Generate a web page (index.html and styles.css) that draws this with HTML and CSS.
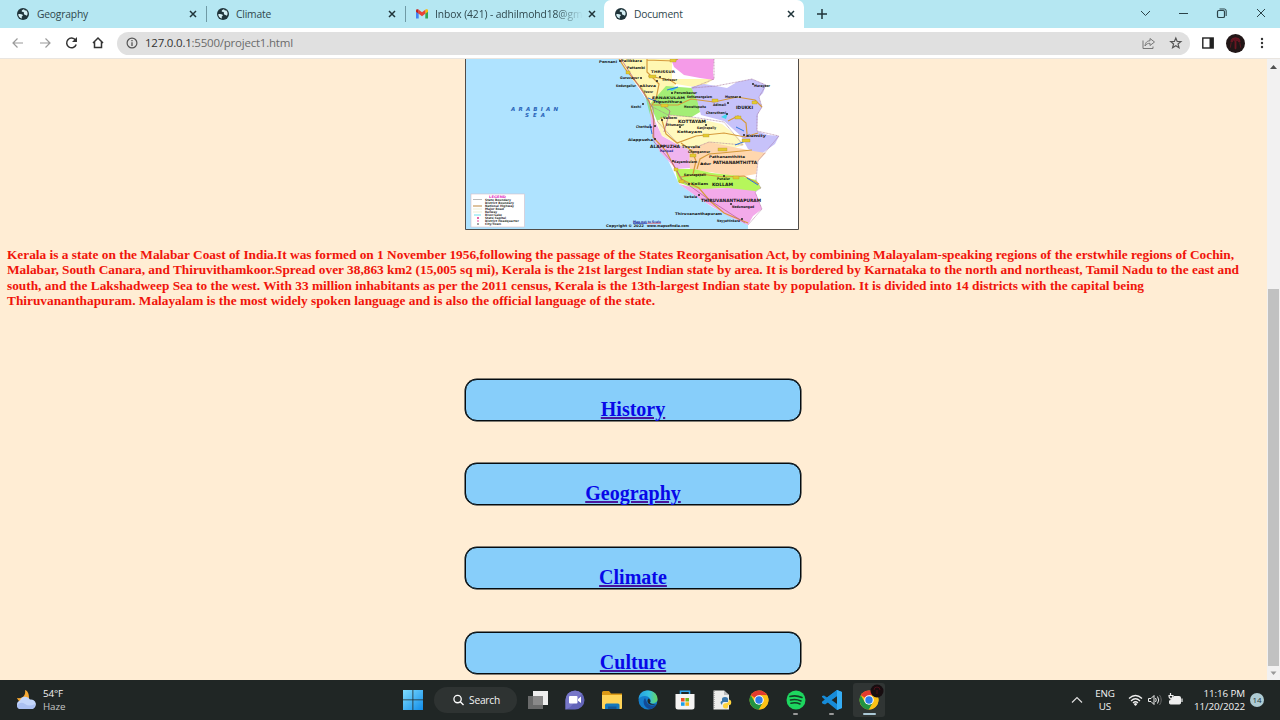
FILE: index.html
```html
<!DOCTYPE html>
<html lang="en">
<head>
<meta charset="utf-8">
<title>Document</title>
<link rel="stylesheet" href="styles.css">
</head>
<body>
<svg class="defs" width="0" height="0">
  <symbol id="globe" viewBox="0 0 12 12"><circle cx="6" cy="6" r="6" fill="#20343a"/><path d="M1.200 6.200C2.800 6 4.600 6 5.600 6.800 6.300 7.600 5.400 8.300 4.700 8.600L4.900 10.600C2.800 10 1.300 8.500 1.200 6.200ZM7 1.300C5.200 2 4.300 2.700 4.800 3.600 5.400 4.300 6.400 3.800 6.900 4.500 7.100 5.700 6.500 6.300 7.700 6.700 8.900 6.900 9.300 7.600 9.900 7.700 11.200 6 10.700 3.500 9 2.200 8.500 2.900 7.500 2.600 7 1.300Z" fill="#d5eff4"/></symbol>
  <symbol id="close" viewBox="0 0 8 8"><path d="M1 1 7 7M7 1 1 7" stroke="#20343a" stroke-width="1.500"/></symbol>
  <symbol id="chrome" viewBox="0 0 20 20"><circle cx="10" cy="10" r="9.500" fill="#fbc116"/><path d="M10 10 1.770 5.250A9.500 9.500 0 0 1 18.230 5.250L10 5.250Z" fill="#e33b2e"/><path d="M1.770 5.250A9.500 9.500 0 0 0 10 19.500L14.110 12.370 10 10 5.900 12.370Z" fill="#229342"/><path d="M10 5.250H18.230A9.500 9.500 0 0 1 10 19.500L14.110 12.370Z" fill="#fbc116"/><circle cx="10" cy="10" r="4.750" fill="#fff"/><circle cx="10" cy="10" r="3.700" fill="#2e7de9"/></symbol>
</svg>

<header class="tabs">
  <div class="tab t1"><svg class="fav"><use href="#globe"/></svg><span class="title">Geography</span><svg class="x"><use href="#close"/></svg></div>
  <div class="tab t2"><svg class="fav"><use href="#globe"/></svg><span class="title">Climate</span><svg class="x"><use href="#close"/></svg></div>
  <div class="tab t3"><svg class="fav" viewBox="0 0 12 12"><path d="M0 2.500V10.500H2.700V5Z" fill="#4285f4"/><path d="M12 2.500V10.500H9.300V5Z" fill="#34a853"/><path d="M0 2.600C0 1.300 1.500 1 2.700 1.800V5.800L0 3.800Z" fill="#c5221f"/><path d="M12 2.600C12 1.300 10.500 1 9.300 1.800V5.800L12 3.800Z" fill="#fbbc04"/><path d="M2.700 1.800 6 4.300 9.300 1.800V5.800L6 8.300 2.700 5.800Z" fill="#ea4335"/></svg><span class="title fade">Inbox (421) - adhilmohd18@gma</span><svg class="x"><use href="#close"/></svg></div>
  <div class="tab active"><svg class="fav"><use href="#globe"/></svg><span class="title">Document</span><svg class="x"><use href="#close"/></svg></div>
  <svg class="plus" viewBox="0 0 10 10"><path d="M5 0V10M0 5H10" stroke="#20343a" stroke-width="1.500"/></svg>
  <svg class="winctl" viewBox="0 0 126 12" fill="none" stroke="#2b4248" stroke-width="1"><path d="M1 4 5.500 8.500 10 4M39 6.500H48M117 2 125 10M125 2 117 10"/><rect x="77.500" y="3.500" width="7" height="7" rx="1.300" stroke-width="1.200"/><path d="M79.500 2H84.500Q86.200 2 86.200 4V9"/></svg>
</header>

<div class="toolbar">
  <svg class="nav" viewBox="0 0 95 16" fill="none" stroke-width="1.200"><path d="M11 8H1M5.500 3.500 1 8 5.500 12.500M28 8H38M33.500 3.500 38 8 33.500 12.500" stroke="#9a9a9a"/><path d="M63.500 5A4.900 4.900 0 1 0 64.200 9.500" stroke="#333" stroke-width="1.500"/><path d="M65 2V7H60Z" fill="#333"/><path d="M81 8 86 3 91 8M82.500 7V12.500H89.500V7" stroke="#333" stroke-width="1.500"/></svg>
  <div class="url">
    <svg class="info" viewBox="0 0 12 12"><circle cx="6" cy="6" r="4.900" fill="none" stroke="#555" stroke-width="1.200"/><path d="M6 5.300V9M6 3V4.200" stroke="#555" stroke-width="1.300"/></svg>
    <span class="addr"><b>127.0.0.1</b>:5500/project1.html</span>
    <svg class="urlicons" viewBox="0 0 42 14" fill="none" stroke="#777"><path d="M2 4.500V12.500H12V10.500"/><path d="M4 10C4.500 6 6.500 4.800 9 4.800V2.500L13.500 6 9 9.500V7.300C7 7.300 5.500 7.700 4 10Z"/><path d="M34.800 2 36.200 5.400 39.900 5.600 37 8 38 11.700 34.800 9.700 31.600 11.700 32.600 8 29.700 5.600 33.400 5.400Z" stroke="#555" stroke-width="1.200"/></svg>
  </div>
  <svg class="panel" viewBox="0 0 12 12"><rect x=".8" y="1" width="10.400" height="10" fill="#fff" stroke="#222" stroke-width="1.400"/><path d="M7.500 1H11V11H7.500Z" fill="#222"/></svg>
  <svg class="avatar" viewBox="0 0 18 18"><circle cx="9" cy="9" r="9" fill="#211617"/><path d="M4.500 7Q5 3.500 9 3.500T13.500 7L12 7.500 10.500 5.500 9.500 7V14H8.500V7L7 5.500 6 7.500ZM5 8 4 13M13 8 14 13" stroke="#7d1a26" stroke-width=".6" fill="#5c1421"/></svg>
  <svg class="dots" viewBox="0 0 4 14" fill="#333"><circle cx="2" cy="3" r="1.200"/><circle cx="2" cy="7" r="1.200"/><circle cx="2" cy="11" r="1.200"/></svg>
</div>

<div class="viewport">
  <main class="page">
    <svg class="map" viewBox="465 59 334 171">
      <path d="M465 59H799V230H465Z" fill="#fff"/>
      <path d="M465 59H619L633 80 650 105 652 133 668 160 679 184 712 207 748 225V230H465Z" fill="#afe3ff"/>
      <path d="M619 59H672V79H714L700 88 676 84 664 96 650 106 646 96 633 80Z" fill="#fff7b2"/>
      <path d="M671 59H714L713 72 714 80 700 78 684 75 674 67Z" fill="#f59be8"/>
      <path d="M650 104 666 86 692 88 697 96 700 112 690 118 671 115 657 121Z" fill="#a4ee75"/>
      <path d="M641 85 647 97 650 106 655 120 653 125 649 111 646 99Z" fill="#8cdf9b"/>
      <path d="M691 87 704 84 716 86 727 88 737 82 752 79 766 85 763 93 759 97 762 107 758 114 757 131 768 135 779 136 775 144 768 149 760 155 748 149 741 136 724 121 701 115 697 100Z" fill="#c7c2fa"/>
      <path d="M657 121 671 115 690 117 722 124 738 137 744 145 724 151 701 148 681 146 661 135Z" fill="#fff9be"/>
      <path d="M650 110 655 121 662 136 680 146 693 153 703 167 676 169 660 152 652 134Z" fill="#f0b5ef"/>
      <path d="M689 150 709 142 738 148 753 151 766 153 758 161 756 174 739 177 710 172 690 171Z" fill="#ffd7ae"/>
      <path d="M675 169 693 169 712 173 739 176 756 180 761 188 754 192 723 188 698 190 678 182Z" fill="#b6f65b"/>
      <path d="M679 184 699 189 728 188 755 191 762 209 753 216 748 225 728 216 703 201Z" fill="#f3aaea"/>
      <path d="M714 59V79L692 88 716 86 737 82 752 79 766 85 759 97 762 107 757 115V131L779 136 768 149 758 161 756 180 761 188 755 192 762 209 748 225M651 106 668 115 692 117 724 122 743 145 709 142 689 150 680 146 657 121" fill="none" stroke="#a16c90" stroke-width=".6" stroke-dasharray="1 .5"/>
      <path d="M619 59 626 70 641 88 649 101 654 121 653 137 666 151 675 168 681 179 699 188 710 201 724 213 748 223M647 59V72L659 84 656 99 652 105 678 105 691 99 714 102 737 97 755 100 762 107M678 59 674 61 647 60M648 76 670 80 676 84M661 117 666 134 677 143 696 136 724 133 745 137 758 133M697 169 700 159 709 154 721 153 752 150M681 177 700 174 724 177 744 176 759 184M728 121 738 116 746 123 747 134M681 143 692 151 696 161 693 174" fill="none" stroke="#d69a3c" stroke-width="1.200"/>
      <path d="M621 59 642 91 653 108 654 142 671 161 683 181 711 201 745 223M652 98 670 111 664 132" fill="none" stroke="#b55991" stroke-width=".7"/>
      <path d="M721 117 728 113 726 119ZM668 89 679 87 672 91Z" fill="#41d5ee"/>
      <path d="M648 98 658 102M667 90 678 87M735 145 746 141M736 127 744 131M747 178 758 185M650 124 652 134" fill="none" stroke="#2c75df"/>
      <g fill="#e3cb30" stroke="#a8852b" stroke-width=".3"><rect x="670" y="59" width="6" height="3"/><rect x="649" y="75" width="7" height="3"/><rect x="626" y="71" width="4" height="3"/><rect x="661" y="104" width="7" height="3"/><rect x="712" y="99" width="6" height="3"/><rect x="752" y="101" width="5" height="3"/><rect x="735" y="116" width="6" height="3"/><rect x="742" y="139" width="8" height="3"/><rect x="718" y="148" width="9" height="3"/><rect x="703" y="134" width="6" height="3"/><rect x="674" y="168" width="4" height="3"/><rect x="690" y="154" width="6" height="3"/><rect x="733" y="176" width="6" height="3"/><rect x="679" y="180" width="5" height="3"/></g>
      <rect x="471" y="194" width="53.500" height="33" fill="#fff" stroke="#d5bec7" stroke-width=".6"/>
      <g id="labels"></g>
      <g id="towns" fill="#222"></g>
      <path d="M633 223.300H647" stroke="#3c4fb8"/><path d="M647 223.300H661" stroke="#d37c8b"/>
      <path d="M473 199.500H482" stroke="#777" stroke-width=".5"/><path d="M473 206H482" stroke="#bd873f"/><path d="M473 209H482M473 212H482" stroke="#dda" stroke-width=".5"/><path d="M474 215H481" stroke="#4cd5e9" stroke-width=".8"/><g fill="#dc2b89"><circle cx="478" cy="218" r="1"/><circle cx="478" cy="221" r=".8"/><circle cx="478" cy="224" r=".8" fill="#333"/></g>
      <path d="M465.500 59V229.500H798.500V59" fill="none" stroke="#514c48"/>
    </svg>
    <p class="intro"><span class="l1">Kerala is a state on the Malabar Coast of India.It was formed on 1 November 1956,following the passage of the States Reorganisation Act, by combining Malayalam-speaking regions of the erstwhile regions of Cochin,</span><span class="l2">Malabar, South Canara, and Thiruvithamkoor.Spread over 38,863 km2 (15,005 sq mi), Kerala is the 21st largest Indian state by area. It is bordered by Karnataka to the north and northeast, Tamil Nadu to the east and</span><span class="l3">south, and the Lakshadweep Sea to the west. With 33 million inhabitants as per the 2011 census, Kerala is the 13th-largest Indian state by population. It is divided into 14 districts with the capital being</span><span class="l4">Thiruvananthapuram. Malayalam is the most widely spoken language and is also the official language of the state.</span></p>
    <nav class="links">
      <div class="card"><a href="#">History</a></div>
      <div class="card"><a href="#">Geography</a></div>
      <div class="card"><a href="#">Climate</a></div>
      <div class="card"><a href="#">Culture</a></div>
    </nav>
  </main>
  <div class="scroll"><svg viewBox="0 0 13 12"><path d="M3 10 6.500 6 10 10Z" fill="#505050"/></svg><div class="thumb"></div><svg viewBox="0 0 13 12"><path d="M3.500 3.500 6.500 7 9.500 3.500Z" fill="#999"/></svg></div>
</div>

<footer class="taskbar">
  <svg class="weather" viewBox="0 0 20 22"><path d="M9 1C10 6 7 10 1 9 3 15 12 16 13 9 13 5 12 2 9 1Z" fill="#f6a934"/><path d="M4 20A4.500 4.500 0 0 1 4 11.500 5.500 5.500 0 0 1 14 10.500 4.800 4.800 0 0 1 16 20Z" fill="#c4d6fb"/><path d="M1 16Q5 12 9 15T19 15Q19 20 15.500 20H4Q1 20 1 16Z" fill="#abc0f2"/></svg>
  <div class="wtext">54°F<br><span>Haze</span></div>
  <svg class="start" viewBox="0 0 20 20"><defs><linearGradient id="win" x1="0" y1="0" x2="1" y2="1"><stop stop-color="#80ddff"/><stop offset="1" stop-color="#108ce9"/></linearGradient></defs><path d="M0 0H9.500V9.500H0ZM10.300 0H20V9.500H10.300ZM0 10.300H9.500V20H0ZM10.300 10.300H20V20H10.300Z" fill="url(#win)"/></svg>
  <div class="search"><svg viewBox="0 0 12 12"><circle cx="5" cy="5" r="4" fill="none" stroke="#fff" stroke-width="1.400"/><path d="M8 8 11.500 11.500" stroke="#fff" stroke-width="1.500"/></svg><span>Search</span></div>
  <div class="apps">
    <svg viewBox="0 0 20 20"><path d="M5 1H20V15H5Z" fill="#eee"/><path d="M0 6H15V19H0Z" fill="#777" opacity=".85"/></svg>
    <svg viewBox="0 0 20 20"><path d="M.5 19.500V10A9.500 9.500 0 1 1 10 19.500Z" fill="#6264b8"/><path d="M.5 19.500V10A9.500 9.500 0 0 1 17 4C11 9 7 18 .5 19.500Z" fill="#7777c8"/><rect x="4" y="6" width="8.500" height="7.500" rx="1" fill="#fff"/><path d="M13 9 16 6.500V13L13 10.700Z" fill="#fff"/></svg>
    <svg viewBox="0 0 20 20"><path d="M0 2.500Q0 1 1.500 1H7L9 3.500H20V8H0Z" fill="#dc9a16"/><path d="M0 5H20V18Q20 19 19 19H1Q0 19 0 18Z" fill="#ffd458"/><path d="M3 19V15Q3 13.500 4.500 13.500H16Q17.500 13.500 17.500 15V19Z" fill="#1478bd"/><path d="M6 19V16.500H14.500V19Z" fill="#115798"/></svg>
    <svg viewBox="0 0 20 20"><defs><linearGradient id="edge"><stop stop-color="#249ee0"/><stop offset=".55" stop-color="#35c1df"/><stop offset="1" stop-color="#68d85b"/></linearGradient></defs><circle cx="10" cy="10" r="9.500" fill="#147dcc"/><path d="M.5 9C1 3 5 .5 10 .5 17 .5 20 6 19.500 10 19 13.500 13.500 14.500 12 12.500 14 9 10.500 6 7 6 3.500 6 1.500 7.500.5 9Z" fill="url(#edge)"/><path d="M7 8C3.500 12 7 19.500 13 19 16 18 17.500 16.500 18.500 14.500 15 16.500 11.500 15.500 9.500 13.500 8.500 12 8.300 10 7 8Z" fill="#124b98"/><path d="M10.500 8.500C8.500 10.500 9.500 14 13 14.700 15.500 15.200 18 14.500 18.500 14 16 14.500 12.500 14 12 12.500 13.300 11 12 9 10.500 8.500Z" fill="#202827"/></svg>
    <svg viewBox="0 0 20 20"><path d="M5.500 5V1.200H14.500V5" fill="none" stroke="#31a6ef" stroke-width="1.500"/><path d="M.5 4H19.500V17Q19.500 19.500 17 19.500H3Q.5 19.500.5 17Z" fill="#f5f4f3"/><path d="M6 8H9.600V11.500H6Z" fill="#eb4e25"/><path d="M10.400 8H14V11.500H10.400Z" fill="#72b91d"/><path d="M6 12.300H9.600V15.800H6Z" fill="#1aa0e9"/><path d="M10.400 12.300H14V15.800H10.400Z" fill="#f8b719"/></svg>
    <svg viewBox="0 0 20 20"><path d="M1.500 .5H12L17 5V19.500H1.500Z" fill="#ededeb"/><path d="M12 .5V5H17" fill="#bbb"/><path d="M2 1V19" stroke="#777" stroke-dasharray="1 1"/><path d="M10 11V9Q10 7 13 7T16 9V12H12Q10 12 10 15L8.500 13Q8.500 11 10 11Z" fill="#3977ac"/><path d="M17 9.500Q20 10 19 14 18.500 15.500 16 15V17Q16 18.500 13 18.500 10.500 18 11 15 11.500 13 15 13 17 12.500 17 9.500Z" fill="#ffd43c"/></svg>
    <svg viewBox="0 0 20 20"><use href="#chrome"/></svg>
    <div class="run"><svg viewBox="0 0 20 20"><circle cx="10" cy="10" r="9.500" fill="#1dd65f"/><path d="M4 6.500Q10 4.800 16 7.500M4.500 10Q10 8.500 15 11M5 13.200Q10 12 14 14" fill="none" stroke="#123c24" stroke-width="1.600" stroke-linecap="round"/></svg><i></i></div>
    <div class="run"><svg viewBox="0 0 20 20"><path d="M15 0 20 2V18L15 20 4.500 11.500 2 14 0 13V12L3 9.800 0 7V6L2 5.500 5 7.500ZM15 6 9.500 10 15 14Z" fill="#178bd8" fill-rule="evenodd"/><path d="M5 7.500 15 0V6L3 14.500 2 14 0 13V12Z" fill="#178bd8"/><path d="M15 0 20 2V18L15 20Z" fill="#35adf5"/></svg><i></i></div>
    <div class="run current"><svg viewBox="0 0 20 20"><use href="#chrome"/></svg><i></i><svg class="badge" viewBox="0 0 14 14"><circle cx="7" cy="7" r="6.500" fill="#170d10"/><path d="M4 6Q4 3 7 3T10 6M7 6V10" stroke="#4c1019" fill="none"/></svg></div>
  </div>
  <svg class="chev" viewBox="0 0 12 8"><path d="M1 6.500 6 1.500 11 6.500" fill="none" stroke="#ddd" stroke-width="1.200"/></svg>
  <div class="lang">ENG<br>US</div>
  <svg class="tray" viewBox="0 0 56 14" fill="none" stroke="#eee"><path d="M1 5.500Q7.500-.500 14 5.500" stroke-width="1.300"/><path d="M3 8Q7.500 3.500 12 8M5 10Q7.500 7.500 10 10" stroke-width="1.300"/><circle cx="7.500" cy="11.300" r="1" fill="#eee"/><path d="M20.500 5.500H23L26 2.500V11.500L23 8.500H20.500ZM27.500 5Q29 7 27.500 9M29.500 3.500Q32 7 29.500 10.500"/><path d="M31.500 2Q35 7 31.500 12" stroke="#666"/><path d="M46 3.500H51.500Q52.500 3.500 52.500 4.500V10Q52.500 11 51.500 11H42.500Q41.500 11 41.500 10V8Z" fill="#eee"/><path d="M54 5.500V9M42.500 0V2M41 2.500H45Q45 5.500 43 5.500T41 2.500Z" stroke-width="1.200"/></svg>
  <div class="clock">11:16 PM<br>11/20/2022</div>
  <div class="count">14</div>
</footer>
<script src="map.js"></script>
</body>
</html>
```
FILE: map.js
```javascript
const NS = "http://www.w3.org/2000/svg";

// Each label: text, x, baseline, drawn width, style class.
const labels = [
  ["Ponnani", 599, 63, 18], ["Pallikkara", 621, 61.5, 21], ["Pattambi", 627, 69, 18],
  ["THRISSUR", 651, 73, 24], ["Guruvayur", 620, 78.500, 19], ["Thrissur", 662, 81, 15],
  ["Kodungallur", 616, 87, 20], ["Aluva", 642, 87, 14], ["Perumbavur", 674, 94, 23],
  ["Paravur", 644, 93, 9], ["Kothamangalam", 687, 97.500, 25],
  ["ERNAKULAM", 652, 99, 33], ["Tripunithura", 653, 103, 29], ["Kochi", 631, 108, 10],
  ["Moovattupuzha", 684, 107.500, 22], ["Vaikom", 663, 119, 14],
  ["KOTTAYAM", 678, 123, 28, "region"], ["Ettumanur", 666, 126, 18],
  ["Kanjirapally", 697, 129, 19], ["Cherthala", 636, 128, 16], ["Kottayam", 677, 133, 25],
  ["Alappuzha", 628, 141, 25], ["ALAPPUZHA", 650, 148, 30, "region"],
  ["Haripad", 660, 152, 13, "water"], ["Tiruvalla", 682, 147.500, 18],
  ["Chengannur", 688, 153, 22], ["Kayamkulam", 674, 163, 23], ["Adur", 700, 165, 11],
  ["Pathanamthitta", 709, 158, 36], ["PATHANAMTHITTA", 713, 164, 44, "region"],
  ["Karunagapalli", 684, 175.500, 22], ["Punalur", 717, 180, 13], ["Kollam", 691, 185, 17],
  ["KOLLAM", 712, 186, 21, "region"], ["Varkala", 684, 198, 13],
  ["THIRUVANANTHAPURAM", 701, 202, 60, "region"], ["Nedumangad", 732, 208, 22],
  ["Thiruvananthapuram", 675, 215, 47], ["Neyyattinkara", 717, 222, 23],
  ["Munnar", 725, 98, 13], ["Marayoor", 754, 87, 16], ["IDUKKI", 736, 109, 17, "region"],
  ["Adimali", 713, 106, 13], ["Cheruthoni", 706, 114, 20], ["Kumily", 746, 137, 20],
  ["Copyright © 2022", 606, 227, 38], ["www.mapsofindia.com", 647, 227, 42],
  ["ARABIAN", 511, 111, 47, "sea"], ["SEA", 525, 116.500, 20, "sea"],
  ["Map not to Scale", 633, 222.500, 28, "water"], ["LEGEND", 489, 197.500, 17, "legend"],
  ["State Boundary", 485, 201, 26, "key"], ["District Boundary", 485, 204, 29, "key"],
  ["National Highway", 485, 207, 29, "key"], ["Major Road", 485, 210, 19, "key"],
  ["Railway", 485, 213, 12, "key"], ["River/Lake", 485, 216, 17, "key"],
  ["State Capital", 485, 219, 21, "key"], ["District Headquarter", 485, 222, 34, "key"],
  ["City/Town", 485, 225, 16, "key"]
];

const towns = [[620,61],[641,78],[657,81],[641,86],[643,104],[662,120],[655,126],[655,139],
  [673,161],[702,164],[689,184],[699,195],[731,204],[742,219],[724,176],[753,84],
  [740,97],[728,103],[727,114],[744,135],[680,127],[706,125],[660,77],[672,93]];

for (const [name, x, y, width, style = "town"] of labels) {
  const text = document.createElementNS(NS, "text");
  text.textContent = name;
  text.setAttribute("x", x);
  text.setAttribute("y", y);
  text.setAttribute("class", style);
  // Sea lettering is widely spaced; everything else stretches with its glyphs.
  text.setAttribute("textLength", width);
  text.setAttribute("lengthAdjust", style === "sea" ? "spacing" : "spacingAndGlyphs");
  document.getElementById("labels").append(text);
}

for (const [x, y] of towns) {
  const dot = document.createElementNS(NS, "circle");
  dot.setAttribute("cx", x);
  dot.setAttribute("cy", y);
  dot.setAttribute("r", 1);
  document.getElementById("towns").append(dot);
}
```
FILE: styles.css
```css
* { box-sizing: border-box; }
body { margin: 0; width: 1280px; height: 720px; overflow: hidden; display: flex; flex-direction: column; font-family: "Open Sans", "Noto Sans", sans-serif; }
svg { display: block; flex: none; }
.defs { position: absolute; }

.tabs { height: 28px; flex: none; background: #b5e7f2; display: flex; align-items: center; color: #2f474d; font-size: 10.3px; letter-spacing: -0.2px; }
.tab { height: 28px; display: flex; align-items: center; flex: none; width: 199px; padding-left: 10px; }
.t1 { width: 207px; padding-left: 17px; }
.fav { width: 12px; height: 12px; margin-right: 8px; }
.title { flex: 1; white-space: nowrap; line-height: 16px; }
.t2 .fav { margin-right: 7px; }
.fade { letter-spacing: -0.1px; -webkit-mask-image: linear-gradient(90deg, #000 120px, transparent 148px); mask-image: linear-gradient(90deg, #000 120px, transparent 148px); }
.x { width: 8px; height: 8px; margin-right: 9px; }
.t1::after, .t2::after { content: ""; width: 1px; height: 16px; background: #6f9aa5; }
.t1 .x { margin-left: auto; }
.t3 { width: 198px; }
.t3 .fav { margin-right: 7px; }
.active { width: 200px; padding-left: 11px; background: #fff; border-radius: 7px 7px 0 0; }
.active .fav { margin-right: 7px; }
.plus { width: 10px; height: 10px; margin-left: 13px; }
.winctl { width: 126px; height: 12px; margin: -3px 14px 0 auto; }

.toolbar { height: 31px; flex: none; background: #fff; border-bottom: 1px solid #e9e5e0; display: flex; align-items: center; padding-left: 12px; }
.nav { width: 95px; height: 16px; }
.url { width: 1073px; height: 23px; margin-left: 10px; border-radius: 12px; background: #e0e0e0; display: flex; align-items: center; padding: 0 7px 0 9px; }
.info { width: 12px; height: 12px; margin-right: 7px; }
.addr { color: #6b6b6b; font-size: 11.5px; letter-spacing: -0.22px; line-height: 16px; flex: 1; }
.addr b { font-weight: 400; color: #333; }
.urlicons { width: 42px; height: 14px; }
.panel { width: 12px; height: 12px; margin-left: 12px; }
.avatar { width: 19px; height: 19px; margin-left: 12px; }
.dots { width: 4px; height: 14px; margin-left: 15px; }

.viewport { height: 621px; flex: none; display: flex; }
.page { width: 1267px; background: #ffedd4; overflow: hidden; }
.map { width: 334px; height: 171px; margin-left: 465px; }
.town { font: bold 3.5px "DejaVu Sans", sans-serif; fill: #151515; }
.region { font: bold 4.4px "DejaVu Sans", sans-serif; fill: #151515; }
.water { font: bold 3.3px "DejaVu Sans", sans-serif; fill: #22248b; }
.key { font: bold 3px "DejaVu Sans", sans-serif; fill: #333; }
.sea { font: italic bold 5.5px "DejaVu Sans", sans-serif; fill: #2864b9; }
.legend { font: bold 3.3px "DejaVu Sans", sans-serif; fill: #e137c3; }

.intro { margin: 17px 0 0 7px; color: #f0140a; font: bold 13.33px/15.4px "Liberation Serif", serif; }
.intro span { display: block; white-space: nowrap; text-align-last: justify; }
.l1 { width: 1227px; }
.l2 { width: 1232px; }
.l3 { width: 1137px; }
.l4 { width: 648px; }
.links { display: flex; flex-direction: column; gap: 42.4px; margin: 69.9px 0 0 465px; }
.card { width: 336px; height: 42px; flex: none; border: 1px solid #050c10; box-shadow: 0 0 0 0.5px #050c10; border-radius: 12px; background: #87cefa; text-align: center; padding-top: 17px; font: bold 20px/24px "Liberation Serif", serif; }
.card a { color: #0808e8; text-decoration: underline; text-decoration-color: #4a159d; }
.scroll { width: 13px; background: #f2f1f1; display: flex; flex-direction: column; }
.scroll svg { width: 13px; height: 12px; }
.thumb { margin: 218px 0 2px 1px; width: 11px; flex: 1; background: #c1c1c1; }

.taskbar { height: 40px; flex: none; background: #202625; display: flex; align-items: center; color: #f3f3f3; font-size: 9.8px; letter-spacing: -0.1px; line-height: 13px; }
.weather { width: 20px; height: 22px; margin-left: 16px; }
.wtext { width: 60px; margin-left: 7px; }
.wtext span { color: #c6c6c6; }
.start { width: 20px; height: 20px; margin-left: 300px; }
.search { width: 83px; height: 26px; border-radius: 13px; margin-left: 11px; background: #2e3332; display: flex; align-items: center; padding-left: 19px; gap: 5px; font-size: 10.2px; letter-spacing: -0.2px; }
.search svg { width: 11px; height: 12px; }
.apps { display: flex; align-items: center; gap: 16.8px; margin-left: 11px; }
.apps svg { width: 20px; height: 20px; }
.run { position: relative; }
.run i { position: absolute; left: 7px; top: 23px; width: 5px; height: 2px; border-radius: 1px; background: #999; }
.current { padding: 7px 6px; margin: 0 -6px; background: #303534; border-radius: 3px; }
.current i { left: 10px; top: 30px; width: 13px; background: #abc8d6; }
.apps .badge { position: absolute; left: 17px; top: 1px; width: 14px; height: 14px; }
.chev { width: 12px; height: 8px; margin-left: auto; }
.lang { width: 32px; margin-left: 6px; text-align: center; }
.tray { width: 56px; height: 14px; margin-left: 7px; }
.clock { width: 61px; text-align: right; white-space: nowrap; }
.count { width: 14px; height: 14px; border-radius: 50%; background: #aecbd3; color: #1e3339; font-size: 8px; line-height: 14px; text-align: center; margin: 0 16px 0 5px; }
```
